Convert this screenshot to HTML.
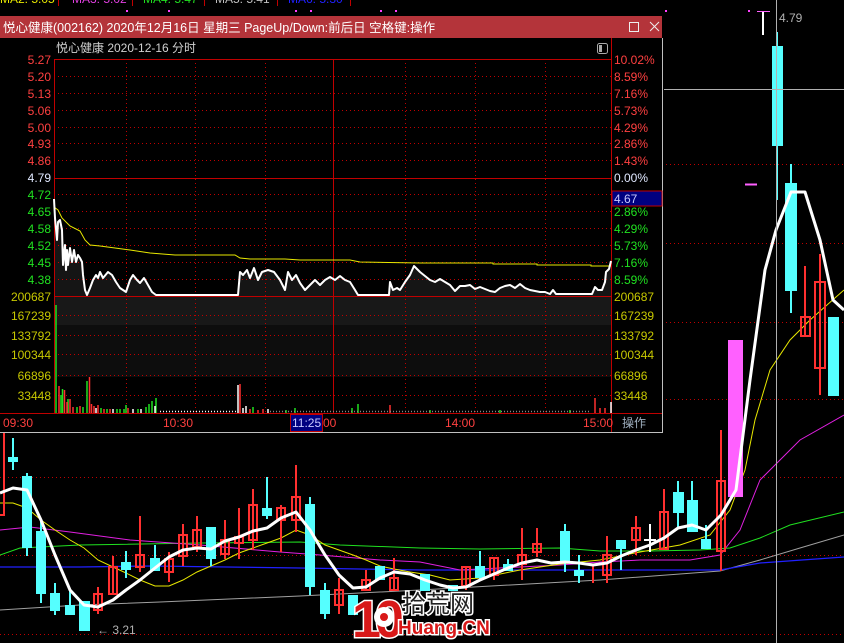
<!DOCTYPE html>
<html><head><meta charset="utf-8"><style>
html,body{margin:0;padding:0;background:#000;width:844px;height:643px;overflow:hidden}
svg{display:block}
text{font-family:"Liberation Sans","Noto Sans CJK SC",sans-serif}
</style></head><body>
<svg width="844" height="643" viewBox="0 0 844 643" xmlns="http://www.w3.org/2000/svg">
<g stroke="#c00000" stroke-dasharray="1,3" stroke-width="1">
<line x1="662" y1="164.5" x2="844" y2="164.5"/><line x1="662" y1="243.5" x2="844" y2="243.5"/>
<line x1="662" y1="322.5" x2="844" y2="322.5"/><line x1="662" y1="399.5" x2="844" y2="399.5"/>
<line x1="0" y1="477.5" x2="844" y2="477.5"/><line x1="0" y1="555.5" x2="844" y2="555.5"/>
<line x1="0" y1="634.5" x2="844" y2="634.5"/>
</g>
<g font-size="12">
<text x="0" y="3" fill="#e8e800">MA2: 5.05</text>
<text x="72" y="3" fill="#e040e0">MA3: 5.02</text>
<text x="143" y="3" fill="#20e020">MA4: 5.47</text>
<text x="215" y="3" fill="#c0c0c0">MA5: 5.41</text>
<text x="288" y="3" fill="#2020ff">MA6: 5.30</text>
</g>
<g stroke="#c00000"><line x1="58.5" y1="0" x2="58.5" y2="6"/><line x1="132.5" y1="0" x2="132.5" y2="6"/><line x1="204.5" y1="0" x2="204.5" y2="6"/><line x1="277.5" y1="0" x2="277.5" y2="6"/><line x1="350.5" y1="0" x2="350.5" y2="6"/></g>
<g fill="#ff40ff"><rect x="126" y="10" width="2" height="2"/><rect x="168" y="10" width="2" height="2"/><rect x="295" y="10" width="2" height="2"/><rect x="310" y="10" width="2" height="2"/><rect x="380" y="10" width="2" height="2"/><rect x="395" y="10" width="2" height="2"/><rect x="665" y="10" width="2" height="2"/><rect x="748" y="10" width="2" height="2"/></g>

<polyline fill="none" stroke="#a0a0a0" stroke-width="1" points="0,610 80,605 160,602 300,596 420,590 600,580 720,571 760,560 800,548 844,535"/>
<polyline fill="none" stroke="#2020ff" stroke-width="1.3" points="0,567 80,567 150,566 300,568 420,570 600,570 720,570 760,563 844,557"/>
<polyline fill="none" stroke="#20e020" stroke-width="1" points="0,555 20,548 80,545 200,543 300,542 340,545 420,548 480,549 560,548 600,551 650,551 700,550 730,548 760,538 790,525 844,512"/>
<polyline fill="none" stroke="#e020e0" stroke-width="1" points="0,530 30,527 70,532 130,540 200,545 280,552 320,555 380,560 420,562 460,570 520,567 560,565 600,562 640,560 690,560 720,555 740,530 760,480 780,460 800,440 844,415"/>
<polyline fill="none" stroke="#e8e800" stroke-width="1" points="0,503 13,503 27,508 41,520 55,530 70,540 84,548 98,560 113,567 126,573 140,580 155,586 169,586 183,580 197,572 211,566 225,560 239,553 253,548 267,543 281,538 296,530 310,535 325,545 339,550 353,555 366,560 380,566 394,569 410,572 430,575 450,580 480,578 520,570 560,564 600,560 640,552 680,545 710,535 730,510 745,470 755,420 770,370 790,340 810,320 844,290"/>

<g stroke-width="2">
<g stroke="#ff3030" fill="none">
<rect x="-3" y="430" width="7" height="85"/>
<line x1="98" y1="587" x2="98" y2="614"/><rect x="94" y="594" width="8" height="16"/>
<line x1="113" y1="556" x2="113" y2="595"/><rect x="109" y="567" width="8" height="27"/>
<line x1="140" y1="516" x2="140" y2="572"/><rect x="136" y="555" width="8" height="12"/>
<line x1="169" y1="552" x2="169" y2="582"/><rect x="165" y="559" width="8" height="13"/>
<line x1="183" y1="524" x2="183" y2="566"/><rect x="179" y="535" width="8" height="21"/>
<line x1="197" y1="516" x2="197" y2="552"/><rect x="193" y="530" width="8" height="17"/>
<line x1="225" y1="520" x2="225" y2="559"/><rect x="221" y="540" width="8" height="14"/>
<line x1="239" y1="508" x2="239" y2="559"/><rect x="235" y="537" width="8" height="6"/>
<line x1="253" y1="489" x2="253" y2="550"/><rect x="249" y="505" width="8" height="35"/>
<line x1="281" y1="505" x2="281" y2="552"/><rect x="277" y="508" width="8" height="12"/>
<line x1="296" y1="465" x2="296" y2="532"/><rect x="292" y="497" width="8" height="23"/>
<line x1="339" y1="578" x2="339" y2="614"/><rect x="335" y="590" width="8" height="15"/>
<line x1="366" y1="570" x2="366" y2="590"/><rect x="362" y="580" width="8" height="10"/>
<line x1="394" y1="558" x2="394" y2="590"/><rect x="390" y="578" width="8" height="12"/>
<line x1="466" y1="567" x2="466" y2="590"/><rect x="462" y="567" width="8" height="19"/>
<line x1="494" y1="559" x2="494" y2="580"/><rect x="490" y="558" width="8" height="17"/>
<line x1="522" y1="528" x2="522" y2="580"/><rect x="518" y="555" width="8" height="9"/>
<line x1="537" y1="528" x2="537" y2="557"/><rect x="533" y="544" width="8" height="8"/>
<line x1="593" y1="564" x2="593" y2="583"/>
<line x1="607" y1="536" x2="607" y2="583"/><rect x="603" y="555" width="8" height="20"/>
<line x1="636" y1="516" x2="636" y2="555"/><rect x="632" y="528" width="8" height="12"/>
<line x1="664" y1="489" x2="664" y2="550"/><rect x="660" y="512" width="8" height="37"/>
<line x1="721" y1="430" x2="721" y2="571"/><rect x="717" y="481" width="8" height="70"/>
<line x1="805" y1="266" x2="805" y2="336"/><rect x="801" y="317" width="9" height="19"/>
<line x1="820" y1="254" x2="820" y2="395"/><rect x="815" y="282" width="10" height="86"/>
</g>
<g fill="#55ffff" stroke="#55ffff">
<line x1="13" y1="438" x2="13" y2="470"/><rect x="9" y="458" width="8" height="3"/>
<line x1="27" y1="473" x2="27" y2="556"/><rect x="23" y="477" width="8" height="70"/>
<line x1="41" y1="520" x2="41" y2="603"/><rect x="37" y="532" width="8" height="61"/>
<line x1="55" y1="583" x2="55" y2="615"/><rect x="51" y="594" width="8" height="16"/>
<line x1="70" y1="591" x2="70" y2="615"/><rect x="66" y="606" width="8" height="8"/>
<rect x="80" y="602" width="9" height="28"/>
<line x1="126" y1="551" x2="126" y2="578"/><rect x="122" y="563" width="8" height="6"/>
<line x1="155" y1="545" x2="155" y2="571"/><rect x="151" y="559" width="8" height="11"/>
<line x1="211" y1="527" x2="211" y2="566"/><rect x="207" y="528" width="8" height="30"/>
<line x1="267" y1="477" x2="267" y2="519"/><rect x="263" y="509" width="8" height="6"/>
<line x1="310" y1="497" x2="310" y2="595"/><rect x="306" y="505" width="8" height="81"/>
<line x1="325" y1="583" x2="325" y2="619"/><rect x="321" y="591" width="8" height="22"/>
<rect x="349" y="596" width="8" height="18"/>
<rect x="376" y="567" width="8" height="12"/>
<rect x="421" y="575" width="8" height="15"/>
<rect x="449" y="586" width="8" height="4"/>
<line x1="480" y1="551" x2="480" y2="580"/><rect x="476" y="567" width="8" height="10"/>
<line x1="508" y1="559" x2="508" y2="570"/><rect x="504" y="565" width="8" height="5"/>
<line x1="565" y1="524" x2="565" y2="572"/><rect x="561" y="532" width="8" height="28"/>
<line x1="579" y1="555" x2="579" y2="583"/><rect x="575" y="571" width="8" height="4"/>
<line x1="621" y1="541" x2="621" y2="570"/><rect x="617" y="541" width="8" height="7"/>
<line x1="678" y1="481" x2="678" y2="527"/><rect x="674" y="493" width="9" height="19"/>
<line x1="692" y1="481" x2="692" y2="532"/><rect x="688" y="501" width="9" height="30"/>
<line x1="706" y1="525" x2="706" y2="549"/><rect x="702" y="540" width="8" height="8"/>
<line x1="777" y1="32" x2="777" y2="200"/><rect x="773" y="47" width="9" height="98"/>
<line x1="791" y1="164" x2="791" y2="313"/><rect x="786" y="184" width="10" height="106"/>
<line x1="833" y1="317" x2="833" y2="395"/><rect x="829" y="318" width="9" height="77"/>
</g>
<line x1="650" y1="524" x2="650" y2="552" stroke="#fff"/><line x1="644" y1="540" x2="656" y2="540" stroke="#fff"/>
<line x1="763" y1="12" x2="763" y2="35" stroke="#fff"/>
</g>
<rect x="728" y="340" width="15" height="157" fill="#ff60ff"/>
<line x1="745" y1="184.5" x2="757" y2="184.5" stroke="#ff60ff" stroke-width="2"/>
<line x1="757" y1="11.5" x2="770" y2="11.5" stroke="#ff60ff"/>
<polyline fill="none" stroke="#fff" stroke-width="3" stroke-linejoin="round" points="0,493 13,488 27,490 41,520 55,555 70,590 84,605 98,607 113,600 126,590 140,580 155,568 169,557 183,550 197,548 211,549 225,541 239,537 253,531 267,528 281,518 296,512 310,530 325,555 339,575 353,588 366,587 380,578 394,572 410,574 425,580 440,585 453,588 466,587 480,580 494,574 508,568 522,563 537,560 551,563 565,562 579,563 593,565 607,563 621,556 636,550 650,545 664,538 678,528 692,525 706,530 721,515 736,490 750,380 765,270 776,230 791,192 805,192 820,240 833,300 844,310"/>
<line x1="776.5" y1="0" x2="776.5" y2="643" stroke="#b0b0b0"/>
<line x1="664" y1="89.5" x2="844" y2="89.5" stroke="#b0b0b0"/>
<text x="779" y="22" fill="#b0b0b0" font-size="12">4.79</text>
<text x="97" y="634" fill="#b0b0b0" font-size="12">← 3.21</text>

<g font-weight="bold">
<text x="352" y="637" font-size="52" fill="#d81818" stroke="#fff" stroke-width="3" paint-order="stroke" letter-spacing="-6">10</text>
<circle cx="384" cy="617" r="10" fill="#fff"/>
<circle cx="384" cy="617" r="4" fill="#d81818"/>
<text x="402" y="612" font-size="24" fill="#222" stroke="#fff" stroke-width="3" paint-order="stroke" font-weight="normal">拾荒网</text>
<text x="398" y="634" font-size="19" fill="#d81818" stroke="#fff" stroke-width="3" paint-order="stroke">Huang.CN</text>
</g>

<rect x="0" y="15" width="662" height="417" fill="#000"/>
<rect x="0" y="16" width="662" height="22" fill="#b4343a"/>
<text x="3" y="32" fill="#fff" font-size="12.5">悦心健康(002162) 2020年12月16日 星期三 PageUp/Down:前后日 空格键:操作</text>
<rect x="629.5" y="22.5" width="9" height="9" fill="none" stroke="#eee"/>
<path d="M650 22 L659 31 M659 22 L650 31" stroke="#eee"/>
<line x1="662.5" y1="38" x2="662.5" y2="432" stroke="#c0c0c0"/>
<line x1="0" y1="432.5" x2="663" y2="432.5" stroke="#c0c0c0"/>
<text x="56" y="52" fill="#d0d0d0" font-size="12">悦心健康  2020-12-16 分时</text>
<rect x="597.5" y="43.5" width="10" height="10" rx="2" fill="none" stroke="#aaa"/><rect x="599" y="45" width="3" height="7" fill="#aaa"/>

<rect x="54" y="297" width="557" height="28" fill="#181818"/>
<rect x="54" y="325" width="557" height="52" fill="#0d0d0d"/>
<polygon fill="#151515" points="54,199 55,218 57,240 58,222 60,220 62,230 63,265 65,245 66,270 67,250 68,265 70,248 72,262 74,250 76,262 78,255 80,258 82,262 83,275 85,290 87,295 90,288 93,280 96,275 98,278 100,272 103,278 108,272 112,275 116,282 120,288 126,292 130,280 133,275 137,280 140,283 144,278 148,285 152,292 156,295 238,295 240,272 243,275 247,270 250,278 254,268 258,280 262,272 268,270 274,272 280,280 285,290 288,272 292,280 296,275 300,283 305,290 310,285 315,280 320,285 325,280 330,277 335,280 340,276 345,280 350,282 355,290 358,295 389,295 390,282 393,290 397,288 400,290 405,282 410,275 414,266 418,270 420,272 425,276 430,280 435,282 440,279 445,282 450,285 455,291 460,286 465,286 470,285 475,289 480,287 485,289 490,291 495,292 500,288 505,286 510,285 515,288 520,284 525,288 530,290 535,291 540,292 545,292 550,294 553,290 556,294 592,294 595,287 598,290 602,290 605,282 606,272 609,269 611,261 611,296 54,296"/>

<g stroke="#c00000" stroke-dasharray="1,3">
<line x1="54" y1="76.5" x2="611" y2="76.5"/><line x1="54" y1="93.5" x2="611" y2="93.5"/><line x1="54" y1="110.5" x2="611" y2="110.5"/><line x1="54" y1="127.5" x2="611" y2="127.5"/><line x1="54" y1="143.5" x2="611" y2="143.5"/><line x1="54" y1="160.5" x2="611" y2="160.5"/>
<line x1="54" y1="194.5" x2="611" y2="194.5"/><line x1="54" y1="211.5" x2="611" y2="211.5"/><line x1="54" y1="228.5" x2="611" y2="228.5"/><line x1="54" y1="245.5" x2="611" y2="245.5"/><line x1="54" y1="262.5" x2="611" y2="262.5"/><line x1="54" y1="279.5" x2="611" y2="279.5"/>
<line x1="54" y1="315.5" x2="611" y2="315.5"/><line x1="54" y1="335.5" x2="611" y2="335.5"/><line x1="54" y1="354.5" x2="611" y2="354.5"/><line x1="54" y1="375.5" x2="611" y2="375.5"/><line x1="54" y1="395.5" x2="611" y2="395.5"/>
<line x1="126.5" y1="59" x2="126.5" y2="413"/><line x1="195.5" y1="59" x2="195.5" y2="413"/><line x1="265.5" y1="59" x2="265.5" y2="413"/><line x1="405.5" y1="59" x2="405.5" y2="413"/><line x1="475.5" y1="59" x2="475.5" y2="413"/><line x1="545.5" y1="59" x2="545.5" y2="413"/>
</g>
<g stroke="#c00000">
<line x1="54" y1="59.5" x2="611" y2="59.5"/><line x1="54" y1="178.5" x2="611" y2="178.5"/><line x1="54" y1="296.5" x2="611" y2="296.5"/>
<line x1="0" y1="413.5" x2="662" y2="413.5"/>
<line x1="54.5" y1="59" x2="54.5" y2="413"/><line x1="333.5" y1="59" x2="333.5" y2="413"/><line x1="611.5" y1="38" x2="611.5" y2="432"/>
</g>

<polyline fill="none" stroke="#e8e800" stroke-width="1" points="54,207 58,210 62,218 70,226 80,231 85,240 90,245 100,246 115,248 130,250 150,253 175,255 200,255 235,255 240,258 250,259 285,259 300,260 350,260 360,262 420,263 493,263 493,264 537,264 537,265 591,265 591,266 611,266"/>
<polyline fill="none" stroke="#fff" stroke-width="2" stroke-linejoin="round" points="54,199 55,218 57,240 58,222 60,220 62,230 63,265 65,245 66,270 67,250 68,265 70,248 72,262 74,250 76,262 78,255 80,258 82,262 83,275 85,290 87,295 90,288 93,280 96,275 98,278 100,272 103,278 108,272 112,275 116,282 120,288 126,292 130,280 133,275 137,280 140,283 144,278 148,285 152,292 156,295 238,295 240,272 243,275 247,270 250,278 254,268 258,280 262,272 268,270 274,272 280,280 285,290 288,272 292,280 296,275 300,283 305,290 310,285 315,280 320,285 325,280 330,277 335,280 340,276 345,280 350,282 355,290 358,295 389,295 390,282 393,290 397,288 400,290 405,282 410,275 414,266 418,270 420,272 425,276 430,280 435,282 440,279 445,282 450,285 455,291 460,286 465,286 470,285 475,289 480,287 485,289 490,291 495,292 500,288 505,286 510,285 515,288 520,284 525,288 530,290 535,291 540,292 545,292 550,294 553,290 556,294 592,294 595,287 598,290 602,290 605,282 606,272 609,269 611,261"/>
<line x1="54" y1="296.5" x2="611" y2="296.5" stroke="#c00000" stroke-width="1"/>

<g stroke-width="1.5">
<g stroke="#20e020"><line x1="56" y1="305" x2="56" y2="413"/><line x1="61" y1="395" x2="61" y2="413"/><line x1="62.5" y1="389" x2="62.5" y2="413"/><line x1="68" y1="399" x2="68" y2="413"/><line x1="77" y1="407" x2="77" y2="413"/><line x1="83" y1="407" x2="83" y2="413"/><line x1="87" y1="381" x2="87" y2="413"/><line x1="101" y1="408" x2="101" y2="413"/><line x1="107" y1="409" x2="107" y2="413"/><line x1="117" y1="409" x2="117" y2="413"/><line x1="120" y1="409" x2="120" y2="413"/><line x1="124" y1="409" x2="124" y2="413"/><line x1="126" y1="405" x2="126" y2="413"/><line x1="138" y1="409" x2="138" y2="413"/><line x1="146" y1="407" x2="146" y2="413"/><line x1="149" y1="404" x2="149" y2="413"/><line x1="152" y1="401" x2="152" y2="413"/><line x1="156" y1="398" x2="156" y2="413"/><line x1="253" y1="407" x2="253" y2="413"/><line x1="286" y1="410" x2="286" y2="413"/><line x1="295" y1="408" x2="295" y2="413"/><line x1="352" y1="408" x2="352" y2="413"/><line x1="358" y1="404" x2="358" y2="413"/><line x1="430" y1="410" x2="430" y2="413"/><line x1="500" y1="410" x2="500" y2="413"/><line x1="570" y1="410" x2="570" y2="413"/></g>
<g stroke="#ff3030"><line x1="59" y1="386" x2="59" y2="413"/><line x1="64.5" y1="390" x2="64.5" y2="413"/><line x1="67" y1="402" x2="67" y2="413"/><line x1="70" y1="399" x2="70" y2="413"/><line x1="73" y1="407" x2="73" y2="413"/><line x1="80" y1="406" x2="80" y2="413"/><line x1="89.5" y1="377" x2="89.5" y2="413"/><line x1="91.5" y1="404" x2="91.5" y2="413"/><line x1="94" y1="406" x2="94" y2="413"/><line x1="98" y1="405" x2="98" y2="413"/><line x1="104" y1="409" x2="104" y2="413"/><line x1="110" y1="409" x2="110" y2="413"/><line x1="128" y1="408" x2="128" y2="413"/><line x1="240" y1="384" x2="240" y2="413"/><line x1="250" y1="409" x2="250" y2="413"/><line x1="258" y1="410" x2="258" y2="413"/><line x1="263" y1="409" x2="263" y2="413"/><line x1="390" y1="405" x2="390" y2="413"/><line x1="595" y1="398" x2="595" y2="413"/><line x1="600" y1="408" x2="600" y2="413"/><line x1="605" y1="408" x2="605" y2="413"/></g>
<g stroke="#fff"><line x1="96" y1="408" x2="96" y2="413"/><line x1="113" y1="409" x2="113" y2="413"/><line x1="133" y1="409" x2="133" y2="413"/><line x1="141" y1="409" x2="141" y2="413"/><line x1="155" y1="406" x2="155" y2="413"/><line x1="238" y1="385" x2="238" y2="413"/><line x1="243" y1="408" x2="243" y2="413"/><line x1="246" y1="406" x2="246" y2="413"/><line x1="268" y1="409" x2="268" y2="413"/><line x1="611" y1="402" x2="611" y2="413"/></g>
<line x1="160" y1="411.5" x2="236" y2="411.5" stroke="#fff" stroke-dasharray="1,2"/>
<line x1="270" y1="411.5" x2="590" y2="411.5" stroke="#888" stroke-dasharray="1,2"/>
</g>
<line x1="0" y1="413.5" x2="662" y2="413.5" stroke="#c00000"/>

<g font-size="12" text-anchor="end">
<g fill="#ff4040"><text x="51" y="64">5.27</text><text x="51" y="81">5.20</text><text x="51" y="98">5.13</text><text x="51" y="115">5.06</text><text x="51" y="132">5.00</text><text x="51" y="148">4.93</text><text x="51" y="165">4.86</text></g>
<text x="51" y="182" fill="#e0e8ff">4.79</text>
<g fill="#20e020"><text x="51" y="199">4.72</text><text x="51" y="216">4.65</text><text x="51" y="233">4.58</text><text x="51" y="250">4.52</text><text x="51" y="267">4.45</text><text x="51" y="284">4.38</text></g>
<g fill="#c8c800"><text x="51" y="301">200687</text><text x="51" y="320">167239</text><text x="51" y="340">133792</text><text x="51" y="359">100344</text><text x="51" y="380">66896</text><text x="51" y="400">33448</text></g>
</g>
<g font-size="12">
<g fill="#ff4040"><text x="614" y="64">10.02%</text><text x="614" y="81">8.59%</text><text x="614" y="98">7.16%</text><text x="614" y="115">5.73%</text><text x="614" y="132">4.29%</text><text x="614" y="148">2.86%</text><text x="614" y="165">1.43%</text></g>
<text x="614" y="182" fill="#e0e8ff">0.00%</text>
<g fill="#20e020"><text x="614" y="216">2.86%</text><text x="614" y="233">4.29%</text><text x="614" y="250">5.73%</text><text x="614" y="267">7.16%</text><text x="614" y="284">8.59%</text></g>
<g fill="#c8c800"><text x="614" y="301">200687</text><text x="614" y="320">167239</text><text x="614" y="340">133792</text><text x="614" y="359">100344</text><text x="614" y="380">66896</text><text x="614" y="400">33448</text></g>
<rect x="612" y="191" width="50" height="15" fill="#000080" stroke="#c00000"/>
<text x="614" y="203" fill="#c8c8ff">4.67</text>
<g fill="#ff4040"><text x="3" y="427">09:30</text><text x="163" y="427">10:30</text><text x="445" y="427">14:00</text><text x="583" y="427">15:00</text><text x="323" y="427">00</text></g>
<rect x="290.5" y="414.5" width="32" height="17" fill="#000080" stroke="#c00000"/>
<text x="292" y="427" fill="#c8c8ff">11:25</text>
<text x="622" y="427" fill="#a0b0c0">操作</text>
</g>
</svg>
</body></html>
